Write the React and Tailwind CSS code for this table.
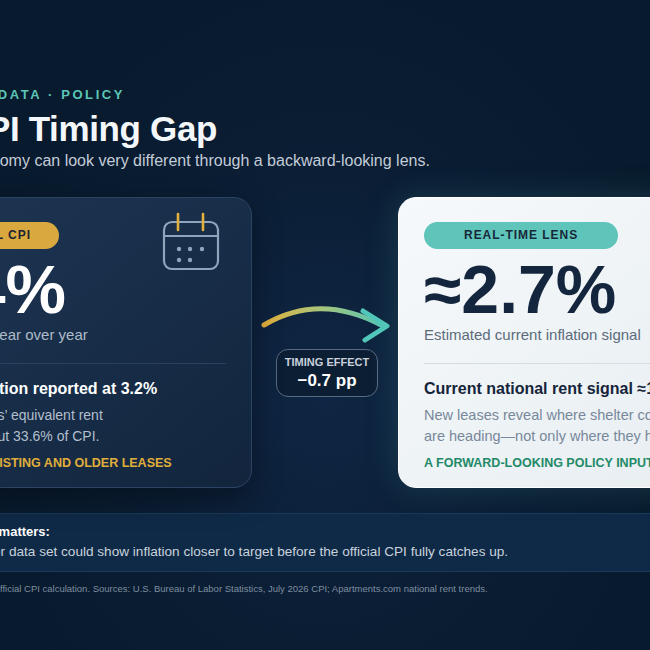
import React from 'react'

function CalendarIcon() {
  return (
    <svg width="58" height="59" viewBox="0 0 58 59" fill="none">
      <rect x="2" y="10" width="54" height="47" rx="8" stroke="#8ea5bc" strokeWidth="2.2" />
      <line x1="2" y1="24" x2="56" y2="24" stroke="#8ea5bc" strokeWidth="2.2" />
      <line x1="16" y1="2" x2="16" y2="18" stroke="#e2b03d" strokeWidth="2.6" strokeLinecap="round" />
      <line x1="41" y1="2" x2="41" y2="18" stroke="#e2b03d" strokeWidth="2.6" strokeLinecap="round" />
      {[[17, 37], [28, 37], [40, 37], [17, 48], [28, 48]].map(([cx, cy]) => (
        <circle key={cx + '-' + cy} cx={cx} cy={cy} r="2.2" fill="#8ea5bc" />
      ))}
    </svg>
  )
}

function TimingArrow() {
  return (
    <svg width="146" height="45" viewBox="0 0 146 45" fill="none">
      <defs>
        <linearGradient id="arrowGrad" x1="12" y1="0" x2="135" y2="0" gradientUnits="userSpaceOnUse">
          <stop offset="0" stopColor="#e2b03b" />
          <stop offset="0.45" stopColor="#a9c47a" />
          <stop offset="1" stopColor="#50c6b8" />
        </linearGradient>
      </defs>
      <path d="M12 25 Q68 -8 131 26" stroke="url(#arrowGrad)" strokeWidth="5" strokeLinecap="round" />
      <path d="M111 11 L135 26 L113 40" stroke="#52c7b9" strokeWidth="5" strokeLinecap="round" strokeLinejoin="round" />
    </svg>
  )
}

export default function App() {
  return (
    <div className="w-[650px] h-[650px] overflow-hidden pt-[87px] bg-[#091b2f] bg-[radial-gradient(ellipse_at_50%_60%,#0f2644_0%,#0a1d33_45%,#081a2d_80%)] font-['Liberation_Sans',Arial,sans-serif]">
      {/* Header */}
      <div className="-ml-[38px] whitespace-nowrap">
        <div className="text-[13px] leading-[16px] font-bold tracking-[0.2em] text-[#5cc6b7]">CPI DATA · POLICY</div>
        <h1 className="mt-[7px] text-[35px] leading-[38px] font-bold tracking-[-0.01em] text-[#f4f7fa]">CPI Timing Gap</h1>
        <p className="mt-[2px] -ml-[29px] text-[16px] leading-[22px] text-[#c3ccd8]">The economy can look very different through a backward-looking lens.</p>
      </div>

      {/* Cards */}
      <div className="mt-[25px] -ml-[100px] flex w-[850px] whitespace-nowrap">
        <div className="relative h-[291px] w-[352px] shrink-0 rounded-[18px] border border-[#2b4463] bg-gradient-to-br from-[#1e3654] to-[#12253d] px-[25px] pt-[24px] shadow-[0_10px_30px_rgba(0,0,0,0.35)]">
          <div className="absolute right-[31px] top-[14px]">
            <CalendarIcon />
          </div>
          <div className="flex">
            <span className="h-[27px] rounded-full bg-[#d9a93f] pl-[15px] pr-[28px] text-[12px] leading-[27px] font-bold tracking-[0.08em] text-[#1b2231]">OFFICIAL CPI</span>
          </div>
          <div className="mt-[6px] -ml-[15px] text-[68px] leading-none font-bold text-white">3.4%</div>
          <div className="mt-[1px] text-[15px] leading-[21px] text-[#aebbc9]">Reported year over year</div>
          <div className="mt-[18px] h-px bg-[#2a4260]" />
          <div className="mt-[14px] text-[16px] leading-[21.6px] font-bold text-white">Rent inflation reported at 3.2%</div>
          <div className="mt-[5px] -ml-[4px] text-[14px] leading-[21px] text-[#b3bfcc]">
            Homeowners’ equivalent rent
            <br />
            alone is about 33.6% of CPI.
          </div>
          <div className="mt-[7px] -ml-[6px] text-[12.5px] leading-[18px] font-bold text-[#e0ae3a]">MIRRORS EXISTING AND OLDER LEASES</div>
        </div>

        <div className="flex w-[146px] shrink-0 flex-col items-center pt-[103px]">
          <TimingArrow />
          <div className="mt-[4px] ml-[4px] flex h-[48px] w-[102px] flex-col items-center justify-center rounded-[12px] border-[1.5px] border-[#576a80] bg-[#0c1e34]">
            <div className="text-[11px] leading-[13px] font-bold text-[#c9d2dc]">TIMING EFFECT</div>
            <div className="mt-[2px] text-[17px] leading-[19px] font-bold text-white">−0.7 pp</div>
          </div>
        </div>

        <div className="h-[291px] w-[352px] shrink-0 rounded-[18px] border border-[#ffffff] bg-gradient-to-br from-[#f6f9fb] to-[#e6edf1] px-[25px] pt-[24px] shadow-[0_0_34px_rgba(95,196,185,0.18)]">
          <div className="flex">
            <span className="h-[27px] rounded-full bg-[#5fc4b9] px-10 text-[12px] leading-[27px] font-bold tracking-[0.08em] text-[#17283a]">REAL-TIME LENS</span>
          </div>
          <div className="mt-[6px] text-[68px] leading-none font-bold text-[#13263d]">≈2.7%</div>
          <div className="mt-[1px] text-[15px] leading-[21px] text-[#5c6b7c]">Estimated current inflation signal</div>
          <div className="mt-[18px] h-px bg-[#d5dde3]" />
          <div className="mt-[14px] text-[16px] leading-[21.6px] font-bold text-[#15243a]">Current national rent signal ≈1.1%</div>
          <div className="mt-[5px] text-[14.5px] leading-[21px] text-[#78889a]">
            New leases reveal where shelter costs
            <br />
            are heading—not only where they have been.
          </div>
          <div className="mt-[7px] text-[12.5px] leading-[18px] font-bold text-[#1f8a68]">A FORWARD-LOOKING POLICY INPUT</div>
        </div>
      </div>

      {/* Why it matters band */}
      <div className="mt-[25px] -ml-[64px] w-[780px] whitespace-nowrap border-y border-[#19395a] bg-[#0f2a47] pl-[20px] pt-[9px] pb-[9px]">
        <div className="text-[13px] leading-[18px] font-bold text-white">Why it matters:</div>
        <div className="mt-[1px] text-[13.6px] leading-[20px] text-[#c9d2dc]">A newer data set could show inflation closer to target before the official CPI fully catches up.</div>
      </div>

      <div className="mt-[10px] -ml-[36px] whitespace-nowrap text-[9.5px] leading-[14px] text-[#7f8ea0]">
        Not an official CPI calculation. Sources: U.S. Bureau of Labor Statistics, July 2026 CPI; Apartments.com national rent trends.
      </div>
    </div>
  )
}
